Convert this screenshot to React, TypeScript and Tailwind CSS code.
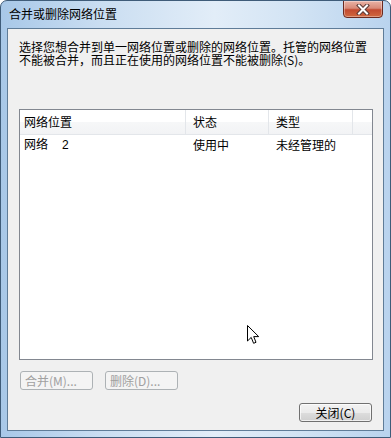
const cjk = "font-['Noto_Sans_CJK_SC','Noto_Sans',sans-serif]";

function CloseGlyph() {
    return (
        <svg width="14" height="11" viewBox="0 0 14 11">
            <path d="M3 1.5 L11 9.5 M11 1.5 L3 9.5" stroke="#5a3a36" strokeWidth="4" strokeLinecap="square" />
            <path d="M3 1.5 L11 9.5 M11 1.5 L3 9.5" stroke="#ffffff" strokeWidth="2" strokeLinecap="square" />
        </svg>
    );
}

function Cursor() {
    return (
        <svg width="13" height="20" viewBox="0 0 13 20" className="absolute left-[246px] top-[324px]">
            <path
                d="M0.5 0.5 L0.5 16 L4.2 12.4 L6.6 18.3 L9 17.3 L6.7 11.6 L11.7 11.6 Z"
                fill="#ffffff"
                stroke="#000000"
                strokeWidth="1"
                strokeLinejoin="miter"
            />
        </svg>
    );
}

export default function App() {
    const columns = [
        { label: "网络位置", pad: "pl-[4px]" },
        { label: "状态", pad: "pl-[7px]" },
        { label: "类型", pad: "pl-[7px]" },
        { label: "", pad: "" },
    ];
    const row = ["网络", "使用中", "未经管理的"];

    return (
        <div className={`relative w-[391px] h-[438px] overflow-hidden rounded-t-[7px] border border-[#3f5c79] bg-[linear-gradient(90deg,#a8c8e8_0%,#c9ddf1_25%,#e2edf8_55%,#d3e4f4_75%,#b9d3ee_100%)] flex flex-col text-[12px] text-black ${cjk}`}>
            {/* Title bar */}
            <div className="h-[27px] flex items-start shrink-0">
                <span className="ml-[8px] mt-[5px] leading-[16px] text-[12px]">合并或删除网络位置</span>
                <div className="ml-auto mr-[7px] w-[40px] h-[18px] -mt-px rounded-b-[4px] border border-[#6b2a20] bg-[linear-gradient(180deg,#e9b3a6_0%,#d88a78_45%,#c24a30_55%,#d0683f_100%)] flex items-center justify-center shadow-[inset_0_0_0_1px_rgba(255,255,255,0.35)]">
                    <CloseGlyph />
                </div>
            </div>

            {/* Client area */}
            <div className="mx-[6px] mb-[6px] flex-1 border border-[#5f7c98] bg-[#f0f0f0] flex flex-col">
                <p className="pl-[11px] pt-[11px] leading-[13px] text-[12px]">
                    选择您想合并到单一网络位置或删除的网络位置。托管的网络位置
                    <br />
                    不能被合并，而且正在使用的网络位置不能被删除(S)。
                </p>

                {/* List view */}
                <div className="ml-[11px] mr-[10px] mt-[43px] h-[251px] border border-[#828790] bg-white flex flex-col">
                    <div className="grid grid-cols-[166px_83px_84px_1fr] h-[25px] border-b border-[#e3e6ea] bg-[linear-gradient(180deg,#ffffff_0%,#ffffff_50%,#f6f7f8_51%,#f2f3f5_100%)]">
                        {columns.map((c, i) => (
                            <div
                                key={i}
                                className={`flex items-center ${c.pad} ${i < 3 ? "border-r border-[#e3e6ea]" : ""}`}
                            >
                                {c.label}
                            </div>
                        ))}
                    </div>
                    <div className="grid grid-cols-[166px_83px_84px_1fr] h-[18px] items-center">
                        <div className="pl-[4px]">
                            {row[0]}
                            <span className="ml-[14px] font-['Liberation_Sans',sans-serif]">2</span>
                        </div>
                        <div className="pl-[7px]">{row[1]}</div>
                        <div className="pl-[7px]">{row[2]}</div>
                        <div />
                    </div>
                </div>

                {/* Disabled action buttons */}
                <div className="flex gap-[12px] ml-[12px] mt-[11px]">
                    <button className="w-[73px] h-[19px] rounded-[3px] border border-[#adb2b5] bg-[#f4f4f4] text-[#a0a0a0] text-[12px] leading-none text-left pl-[4px]">
                        合并(M)...
                    </button>
                    <button className="w-[73px] h-[19px] rounded-[3px] border border-[#adb2b5] bg-[#f4f4f4] text-[#a0a0a0] text-[12px] leading-none text-left pl-[4px]">
                        删除(D)...
                    </button>
                </div>

                <div className="flex justify-end mr-[11px] mt-[13px]">
                    <button className="w-[73px] h-[19px] rounded-[3px] border border-[#707070] bg-[linear-gradient(180deg,#f2f2f2_0%,#ebebeb_50%,#dddddd_51%,#cfcfcf_100%)] shadow-[inset_0_0_0_1px_rgba(255,255,255,0.7)] text-[12px] leading-none">
                        关闭(C)
                    </button>
                </div>
            </div>

            <Cursor />
        </div>
    );
}
